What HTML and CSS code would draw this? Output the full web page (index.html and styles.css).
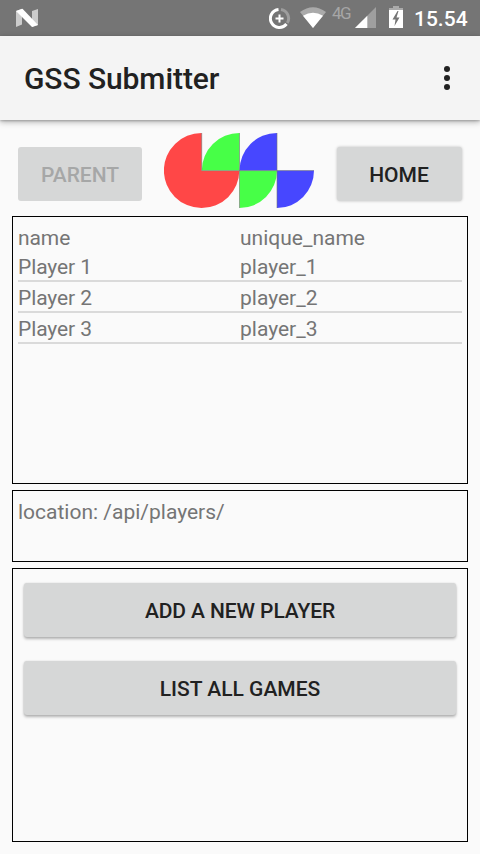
FILE: index.html
```html
<!DOCTYPE html>
<html lang="en">
<head>
<meta charset="utf-8">
<title>GSS Submitter</title>
<link rel="stylesheet" href="styles.css">
</head>
<body>
<div class="status-bar">
  <svg class="android-n" width="22" height="20" viewBox="0 0 22 20">
    <path d="M0 3 6 .8V16.5L0 19ZM22 1 16 3V19L22 17Z" fill="#ccc"/>
    <path d="M0 3 6.5 .8 22 17 16 19Z" fill="#fff"/>
  </svg>
  <div class="status-icons">
    <svg class="data-saver" width="22" height="22" viewBox="0 0 22 22" fill="none" stroke-width="3">
      <path d="M12 2.5A9 9 0 0 1 18.3 16" stroke="#9d9d9d"/>
      <path d="M9.5 2.5A9 9 0 1 0 17.5 17" stroke="#fff"/>
      <path d="M10.5 7.5V15.5M6.5 11.5H14.5" stroke="#fff" stroke-width="2"/>
    </svg>
    <svg class="wifi" width="26" height="22" viewBox="0 0 26 22">
      <path d="M13 21 0 5Q13 -4.5 26 5Z" fill="#aaa"/>
      <path d="M13 21 3 8.7Q13 3 23 8.7Z" fill="#fff"/>
    </svg>
    <span class="network">4G</span>
    <svg class="signal" width="21" height="21" viewBox="0 0 21 21">
      <path d="M0 21 21 0V21Z" fill="#9f9f9f"/>
      <path d="M0 21 12.3 8.7V21Z" fill="#fff"/>
    </svg>
    <svg class="battery" width="14" height="22" viewBox="0 0 14 22">
      <path d="M4 0H10V2H14V5H0V2H4Z" fill="#aaa"/>
      <path d="M0 4H14V22H0Z" fill="#fff"/>
      <path d="M8.5 5 3.5 13.5H6.5L5.5 20 10.5 11.5H7.5L9.5 5Z" fill="#757575"/>
    </svg>
    <span class="clock">15.54</span>
  </div>
</div>
<header class="app-bar">
  <h1 class="title">GSS Submitter</h1>
  <svg class="overflow" width="6" height="24" viewBox="0 0 6 24" fill="#212121">
    <circle cx="3" cy="3" r="3"/><circle cx="3" cy="12" r="3"/><circle cx="3" cy="21" r="3"/>
  </svg>
</header>
<main class="content">
  <div class="nav-row">
    <button class="button nav-button disabled" disabled>PARENT</button>
    <svg class="logo" width="150" height="75" viewBox="0 0 150 75">
      <path d="M37.7 0A37.7 37.5 0 1 0 75.3 37.7H37.7Z" fill="#ff4747"/>
      <path d="M75.5 0A37.7 37.5 0 0 0 37.8 37.5H75.5ZM75.5 37.5H113A37.5 37.5 0 0 1 75.5 75Z" fill="#47ff47"/>
      <path d="M113 0A37.5 37.5 0 0 0 75.5 37.5H113ZM113 37.5H150A37 37.5 0 0 1 113 75Z" fill="#4747ff"/>
      <path d="M37.7 0V37.6H150M75.5 0V75M113 0V75" fill="none" stroke="#777" stroke-opacity=".6" stroke-width="1"/>
    </svg>
    <button class="button nav-button home">HOME</button>
  </div>
  <section class="panel results">
    <div class="row head"><span>name</span><span>unique_name</span></div>
    <div class="row"><span>Player 1</span><span>player_1</span></div>
    <div class="row"><span>Player 2</span><span>player_2</span></div>
    <div class="row"><span>Player 3</span><span>player_3</span></div>
  </section>
  <section class="panel location">location: /api/players/</section>
  <section class="panel actions">
    <button class="button add">ADD A NEW PLAYER</button>
    <button class="button">LIST ALL GAMES</button>
  </section>
</main>
</body>
</html>
```
FILE: styles.css
```css
* { box-sizing: border-box; }
body {
  margin: 0;
  height: 854px;
  display: flex;
  flex-direction: column;
  background: #fafafa;
  color: #757575;
  font: 21px/29px Roboto, sans-serif;
  overflow: hidden;
}
.status-bar {
  flex: none;
  height: 36px;
  padding: 0 12px 0 16px;
  display: flex;
  justify-content: space-between;
  align-items: flex-start;
  background: #757575;
  color: #fff;
}
.android-n { margin-top: 8px; }
.status-icons { display: flex; align-items: flex-start; }
.data-saver { margin: 7px 9px 0 0; }
.wifi { margin: 7px 6px 0 0; }
.network {
  width: 20px;
  margin: 3px 3px 0 0;
  font-size: 17px;
  font-weight: 400;
  line-height: 21px;
  letter-spacing: -1.5px;
  color: #a6a6a6;
}
.signal { margin: 7px 13px 0 0; }
.battery { margin: 6px 11px 0 0; }
.clock {
  width: 54px;
  font-weight: 500;
  line-height: 39px;
  white-space: nowrap;
}
.app-bar {
  flex: none;
  height: 84px;
  padding: 0 30px 0 24px;
  display: flex;
  justify-content: space-between;
  align-items: center;
  background: #f4f4f4;
  box-shadow: 0 2px 6px rgba(0, 0, 0, .3), 0 1px 2px rgba(0, 0, 0, .2);
}
.title {
  margin: 0;
  padding-top: 2px;
  font-size: 30px;
  font-weight: 500;
  line-height: 36px;
  letter-spacing: -.08px;
  color: #212121;
}
.content {
  flex: 1;
  display: flex;
  flex-direction: column;
  gap: 6px;
  padding: 12px;
}
.nav-row {
  height: 78px;
  display: flex;
  justify-content: space-between;
  align-items: center;
  padding: 0 6px;
}
.logo { margin: 0 1px 1px 0; }
.button {
  height: 54px;
  padding: 2px 0 0;
  border: 0;
  border-radius: 3px;
  background: #d6d7d7;
  color: #212121;
  font: 500 21px/52px Roboto, sans-serif;
  box-shadow: 0 2px 3px rgba(0, 0, 0, .28), 0 0 2px rgba(0, 0, 0, .12);
}
.nav-button { width: 124px; margin-top: 6px; box-shadow: 0 0 3px rgba(0, 0, 0, .25); }
.home { width: 125px; padding-right: 1px; }
.disabled { color: #a6a7a7; box-shadow: none; }
.add { letter-spacing: -.1px; }
.panel {
  border: 1px solid #000;
  padding: 5px;
}
.results { height: 268px; }
.location { height: 72px; padding-top: 7px; }
.actions {
  height: 274px;
  padding: 14px 11px;
  display: flex;
  flex-direction: column;
  gap: 24px;
}
.row {
  display: grid;
  grid-template-columns: 1fr 1fr;
  height: 31px;
  padding-top: 2px;
  border-bottom: 2px solid #dadada;
}
.head { height: 29px; border: 0; }
.row span:first-child { letter-spacing: -.1px; }
```
